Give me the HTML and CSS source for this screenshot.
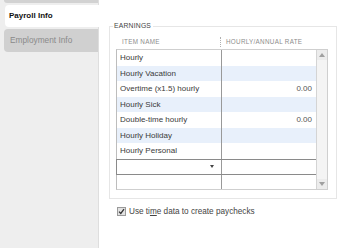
FILE: index.html
```html
<!DOCTYPE html>
<html>
<head>
<meta charset="utf-8">
<link rel="stylesheet" href="styles.css">
</head>
<body>
<div class="app">
  <nav class="sidebar">
    <div class="tab tab-prev"></div>
    <div class="tab tab-active">Payroll Info</div>
    <div class="tab tab-idle">Employment Info</div>
  </nav>
  <main class="main">
    <fieldset class="group">
      <legend class="legend">EARNINGS</legend>
      <div class="grid-head">
        <div class="head-cell">ITEM NAME</div>
        <div class="head-cell head-rate">HOURLY/ANNUAL RATE</div>
      </div>
      <div class="grid">
        <div class="rows">
          <div class="row"><span class="c-name">Hourly</span><span class="c-rate"></span></div>
          <div class="row alt"><span class="c-name">Hourly Vacation</span><span class="c-rate"></span></div>
          <div class="row"><span class="c-name">Overtime (x1.5) hourly</span><span class="c-rate">0.00</span></div>
          <div class="row alt"><span class="c-name">Hourly Sick</span><span class="c-rate"></span></div>
          <div class="row"><span class="c-name">Double-time hourly</span><span class="c-rate">0.00</span></div>
          <div class="row alt"><span class="c-name">Hourly Holiday</span><span class="c-rate"></span></div>
          <div class="row"><span class="c-name">Hourly Personal</span><span class="c-rate"></span></div>
          <div class="row edit"><span class="c-name c-drop"><span class="caret"></span></span><span class="c-rate"></span></div>
          <div class="row blank"><span class="c-name"></span><span class="c-rate"></span></div>
        </div>
        <div class="scrollbar">
          <div class="sb-btn"><span class="arrow-up"></span></div>
          <div class="sb-track"></div>
          <div class="sb-btn"><span class="arrow-down"></span></div>
        </div>
      </div>
    </fieldset>
    <label class="check">
      <span class="box"><svg width="7" height="7" viewBox="0 0 7 7"><path d="M1 3.6 L2.8 5.4 L6 1.2" fill="none" stroke="#333" stroke-width="1.3"/></svg></span>
      <span class="check-text">Use ti<u>m</u>e data to create paychecks</span>
    </label>
  </main>
</div>
</body>
</html>
```

FILE: styles.css
```css
* { box-sizing: border-box; }
html, body { margin: 0; padding: 0; background: #fff; }
body { font-family: "Liberation Sans", Arial, sans-serif; width: 346px; height: 248px; overflow: hidden; }

.app { display: flex; height: 248px; }

.sidebar {
  width: 99px;
  flex: none;
  background: #eeeeee;
  border-right: 1px solid #dedede;
  padding-left: 4px;
  display: flex;
  flex-direction: column;
}
.tab {
  border-radius: 4px 0 0 4px;
  font-size: 8.5px;
  line-height: 22px;
  height: 22px;
  padding-left: 5px;
}
.tab-prev { height: 3px; background: #d2d2d2; border-radius: 0 0 0 4px; margin-bottom: 2px; }
.tab-active { background: #fff; color: #111; font-weight: bold; margin-right: -1px; margin-left: 1px; padding-left: 4px; font-size: 8px; }
.tab-idle { background: #d0d0d0; color: #8a8a8a; margin-top: 2px; padding-left: 6px; height: 23px; line-height: 23px; font-size: 8.3px; }

.main { flex: 1; padding: 22px 0 0 10px; }

.group {
  margin: 0;
  width: 226px;
  border: 1px solid #e6e6e6;
  padding: 6px 8px 8px 6px;
}
.legend {
  font-size: 6.8px;
  color: #444;
  line-height: 8px;
  padding: 0 2px 0 1px;
  margin-left: -3px;
  letter-spacing: 0.2px;
}

.grid-head { display: flex; height: 11px; margin-bottom: 2px; align-items: center; }
.head-cell {
  font-size: 6.3px;
  color: #8c8c8c;
  letter-spacing: 0.3px;
  line-height: 10px;
}
.head-cell:first-child { width: 104px; padding-left: 6px; }
.head-rate { border-left: 1px dotted #b0b0b0; padding-left: 5px; }

.grid { display: flex; border: 1px solid #cfcfcf; border-left-color: #bdbdbd; height: 141px; }
.rows { width: 199px; display: flex; flex-direction: column; }
.row {
  display: flex;
  height: 15.5px;
  font-size: 8px;
  color: #3a3a3a;
  align-items: center;
}
.row.alt { background: #e8f0fb; }
.c-name { width: 105px; padding-left: 3px; height: 100%; display: flex; align-items: center; border-right: 1px solid #999; }
.c-rate { flex: 1; text-align: right; padding-right: 4px; color: #555; }
.row.edit { height: 16px; border: 1px solid #8a8a8a; margin: 0 -1px 0 -1px; }
.row.edit .c-name { width: 105px; border-right: 1px solid #999; justify-content: flex-end; padding-right: 7px; }
.caret { width: 0; height: 0; border-left: 2.5px solid transparent; border-right: 2.5px solid transparent; border-top: 3px solid #444; }
.row.blank { flex: 1; }

.scrollbar { width: 11px; border-left: 1px solid #d4d4d4; background: #f4f4f4; display: flex; flex-direction: column; }
.sb-btn { height: 10px; display: flex; align-items: center; justify-content: center; background: #ececec; }
.sb-track { flex: 1; }
.arrow-up { width: 0; height: 0; border-left: 3px solid transparent; border-right: 3px solid transparent; border-bottom: 4px solid #a0a0a0; }
.arrow-down { width: 0; height: 0; border-left: 3px solid transparent; border-right: 3px solid transparent; border-top: 4px solid #a0a0a0; }

.check { display: flex; align-items: center; margin: 8px 0 0 8px; gap: 3px; }
.box {
  width: 9px; height: 9px;
  border: 1px solid #9a9a9a;
  background: #e2e2e2;
  display: flex; align-items: center; justify-content: center;
}
.check-text { font-size: 8.2px; color: #444; }
.check-text u { text-decoration: underline; }
```
